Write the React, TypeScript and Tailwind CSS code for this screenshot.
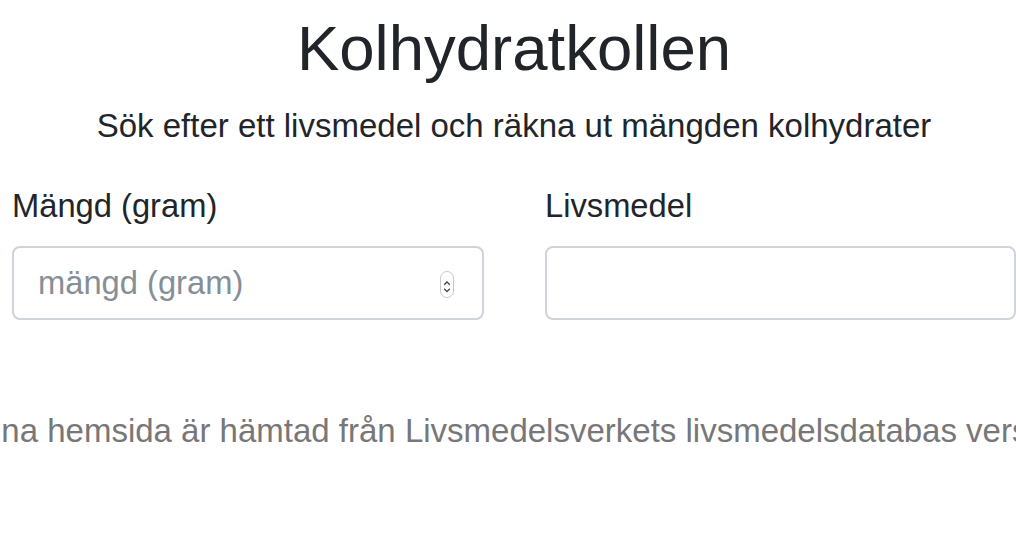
export default function App() {
  return (
    <div className="w-[1016px] h-[552px] overflow-hidden bg-white text-[#212529] font-['Liberation_Sans',Arial,sans-serif]">
      <div className="ml-[12px] w-[1004px] pt-[12px]">
        {/* Header */}
        <h1 className="text-center text-[63.5px] leading-[73px] font-normal">
          Kolhydratkollen
        </h1>
        <p className="mt-[17px] text-center text-[33px] leading-[48px]">
          Sök efter ett livsmedel och räkna ut mängden kolhydrater
        </p>

        {/* Form */}
        <div className="mt-[32px] flex gap-[61px]">
          <div className="w-[472px]">
            <label className="block text-[32.7px] leading-[48px]">Mängd (gram)</label>
            <div className="relative mt-[16px]">
              <input
                type="text"
                placeholder="mängd (gram)"
                className="h-[74px] w-full rounded-[8px] border-2 border-[#ced4da] bg-white pl-[24px] pr-[60px] text-[32.7px] leading-[48px] text-[#495057] outline-none placeholder:text-[#868e96]"
              />
              <svg
                width="14"
                height="27"
                viewBox="0 0 14 27"
                className="absolute right-[30px] top-[25px]"
              >
                <rect x="0.5" y="0.5" width="13" height="26" rx="6.5" fill="#fff" stroke="#c9c9c9" />
                <polyline points="4.2,13.8 7,11 9.8,13.8" fill="none" stroke="#454545" strokeWidth="1.3" />
                <polyline points="4.2,17.8 7,20.6 9.8,17.8" fill="none" stroke="#454545" strokeWidth="1.3" />
              </svg>
            </div>
          </div>
          <div className="w-[471px]">
            <label className="block text-[32.7px] leading-[48px]">Livsmedel</label>
            <div className="mt-[16px]">
              <input
                type="text"
                className="h-[74px] w-full rounded-[8px] border-2 border-[#ced4da] bg-white px-[24px] text-[32.7px] leading-[48px] text-[#495057] outline-none"
              />
            </div>
          </div>
        </div>

        {/* Footer note */}
        <div className="mt-[87px] flex justify-center">
          <p className="ml-[44px] shrink-0 whitespace-nowrap text-[33px] leading-[48px] text-[#777777]">
            Data på denna hemsida är hämtad från Livsmedelsverkets livsmedelsdatabas version 2017-12-15
          </p>
        </div>
      </div>
    </div>
  );
}
